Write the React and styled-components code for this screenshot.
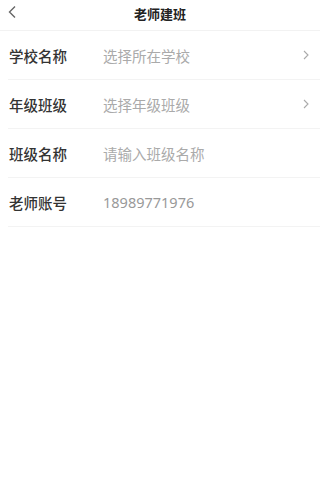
import React from 'react'
import styled, { createGlobalStyle } from 'styled-components'

const Global = createGlobalStyle`
  html, body {
    margin: 0;
    padding: 0;
    background: #fff;
  }
  body {
    font-family: "Noto Sans", "Noto Sans CJK SC", sans-serif;
  }
`

const Page = styled.div`
  width: 320px;
  min-height: 492px;
  background: #fff;
`

const Header = styled.div`
  height: 31px;
  display: flex;
  align-items: center;
  justify-content: center;
  position: relative;
  border-bottom: 1px solid #f2f2f2;
  box-sizing: border-box;
`

const Back = styled.div`
  position: absolute;
  left: 7px;
  top: 5px;
  width: 12px;
  height: 14px;
  display: flex;
`

const Title = styled.h1`
  margin: 0;
  font-size: 13px;
  font-weight: 700;
  color: #222;
  margin-top: -4px;
`

const List = styled.div`
  display: flex;
  flex-direction: column;
`

const Row = styled.div`
  height: 49px;
  margin-left: 8px;
  display: flex;
  align-items: center;
  border-bottom: 1px solid #f3f3f3;
  box-sizing: border-box;
  padding-right: 10px;
`

const Label = styled.div`
  width: 94px;
  padding-left: 1px;
  font-size: 14.5px;
  color: #333;
  font-weight: 500;
`

const Value = styled.div`
  flex: 1;
  font-size: 14.5px;
  color: ${p => (p.$filled ? '#999' : '#aaa')};
`

const Arrow = styled.div`
  width: 8px;
  height: 10px;
  display: flex;
`

const rows = [
  { label: '学校名称', value: '选择所在学校', arrow: true },
  { label: '年级班级', value: '选择年级班级', arrow: true },
  { label: '班级名称', value: '请输入班级名称' },
  { label: '老师账号', value: '18989771976', filled: true },
]

export default function App() {
  return (
    <Page>
      <Global />
      <Header>
        <Back>
          <svg width="12" height="14" viewBox="0 0 12 14">
            <path d="M8 1.5 L2.5 7 L8 12.5" fill="none" stroke="#666" strokeWidth="1.4" />
          </svg>
        </Back>
        <Title>老师建班</Title>
      </Header>
      <List>
        {rows.map(r => (
          <Row key={r.label}>
            <Label>{r.label}</Label>
            <Value $filled={r.filled}>{r.value}</Value>
            {r.arrow && (
              <Arrow>
                <svg width="8" height="10" viewBox="0 0 8 10">
                  <path d="M2 1 L6 5 L2 9" fill="none" stroke="#aaa" strokeWidth="1.1" />
                </svg>
              </Arrow>
            )}
          </Row>
        ))}
      </List>
    </Page>
  )
}
